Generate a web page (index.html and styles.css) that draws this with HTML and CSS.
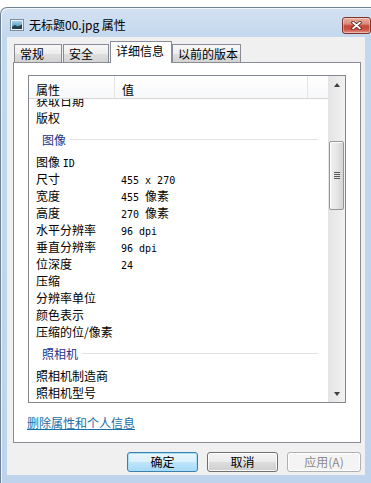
FILE: index.html
```html
<!DOCTYPE html>
<html lang="zh-CN">
<head>
  <meta charset="UTF-8" />
  <title>无标题00.jpg 属性</title>
  <link rel="stylesheet" href="styles.css">
</head>
<body>
  <div id="window">
    <div class="titlebar">
      <svg class="file-icon" width="14" height="12" viewBox="0 0 14 12">
        <defs>
          <linearGradient id="sky" x1="0" y1="0" x2="0" y2="1">
            <stop offset="0" stop-color="#9fd2ee"/>
            <stop offset="1" stop-color="#3d86a8"/>
          </linearGradient>
        </defs>
        <rect x="0.5" y="0.5" width="13" height="11" fill="#eef2f6" stroke="#7f8e9b"/>
        <rect x="2" y="2" width="10" height="8" fill="url(#sky)"/>
        <path d="M2 8 L5 6 L8 7.5 L12 5.5 V10 H2 Z" fill="#23404f"/>
      </svg>
      <span class="title">无标题00.jpg 属性</span>
      <div class="close">
        <svg width="11" height="9" viewBox="0 0 11 9">
          <path d="M2 1.5 L9 7.5 M9 1.5 L2 7.5" stroke="#5a1a12" stroke-width="3.4" stroke-linecap="round"/>
          <path d="M2 1.5 L9 7.5 M9 1.5 L2 7.5" stroke="#fff" stroke-width="1.8" stroke-linecap="round"/>
        </svg>
      </div>
    </div>

    <div class="client">
      <div class="tabs">
        <div class="tab">常规</div>
        <div class="tab">安全</div>
        <div class="tab active">详细信息</div>
        <div class="tab">以前的版本</div>
      </div>

      <div class="panel">
        <div class="list">
          <div class="list-main">
            <div class="list-head">
              <div class="col-name">属性</div>
              <div class="col-value">值</div>
            </div>
            <div class="list-body">
              <div class="rows">
                <div class="row"><div class="k">获取日期</div><div class="v"></div></div>
                <div class="row"><div class="k">版权</div><div class="v"></div></div>
                <div class="group">图像</div>
                <div class="row"><div class="k">图像 <span class="n">ID</span></div><div class="v"></div></div>
                <div class="row"><div class="k">尺寸</div><div class="v"><span class="n">455 x 270</span></div></div>
                <div class="row"><div class="k">宽度</div><div class="v"><span class="n">455 </span>像素</div></div>
                <div class="row"><div class="k">高度</div><div class="v"><span class="n">270 </span>像素</div></div>
                <div class="row"><div class="k">水平分辨率</div><div class="v"><span class="n">96 dpi</span></div></div>
                <div class="row"><div class="k">垂直分辨率</div><div class="v"><span class="n">96 dpi</span></div></div>
                <div class="row"><div class="k">位深度</div><div class="v"><span class="n">24</span></div></div>
                <div class="row"><div class="k">压缩</div><div class="v"></div></div>
                <div class="row"><div class="k">分辨率单位</div><div class="v"></div></div>
                <div class="row"><div class="k">颜色表示</div><div class="v"></div></div>
                <div class="row"><div class="k">压缩的位/像素</div><div class="v"></div></div>
                <div class="group">照相机</div>
                <div class="row"><div class="k">照相机制造商</div><div class="v"></div></div>
                <div class="row"><div class="k">照相机型号</div><div class="v"></div></div>
              </div>
            </div>
          </div>
          <div class="scrollbar">
            <div class="sb-btn"><span class="arrow-up"></span></div>
            <div class="thumb"><span class="grip"></span></div>
            <div class="sb-track"></div>
            <div class="sb-btn"><span class="arrow-down"></span></div>
          </div>
        </div>
        <div class="links"><a href="#">删除属性和个人信息</a></div>
      </div>

      <div class="buttons">
        <button class="btn default">确定</button>
        <button class="btn">取消</button>
        <button class="btn disabled">应用(A)</button>
      </div>
    </div>
  </div>
</body>
</html>
```

FILE: styles.css
```css
body {
  margin: 0;
  background: #fff;
  font-family: "Noto Sans CJK SC", sans-serif;
  font-size: 12px;
  color: #000;
  overflow: hidden;
}
#window {
  margin-top: 7px;
  width: 380px;
  height: 475px;
  padding: 0 0 0 6px;
  border-top: 1px solid #6f8294;
  border-left: 1px solid #6f8294;
  border-radius: 7px 0 0 0;
  background: linear-gradient(#d3e2f3, #c3d7ed 30px, #bfd4ec);
  box-shadow: inset 1px 1px 0 rgba(255,255,255,0.7);
}
.titlebar {
  height: 24px;
  padding-top: 5px;
  display: flex;
  align-items: center;
}
.file-icon {
  margin-left: 3px;
}
.title {
  margin-left: 5px;
  font-size: 12px;
  line-height: 16px;
}
.close {
  margin-left: auto;
  margin-right: 16px;
  width: 27px;
  height: 15px;
  border: 1px solid #83342a;
  border-radius: 3px;
  background: linear-gradient(#e9b0a4, #d98a7c 40%, #c5493a 52%, #c94f3f 75%, #e39a88);
  box-shadow: inset 0 0 0 1px rgba(255,255,255,0.35);
  display: flex;
  align-items: center;
  justify-content: center;
}
.client {
  width: 358px;
  height: 438px;
  padding-top: 4px;
  box-sizing: border-box;
  background: #f0f0f0;
}
.tabs {
  height: 21px;
  padding-left: 7px;
  display: flex;
  align-items: flex-end;
  gap: 1px;
}
.tab {
  height: 17px;
  line-height: 17px;
  padding-left: 5px;
  box-sizing: content-box;
  border: 1px solid #898c95;
  border-bottom: none;
  background: linear-gradient(#f7f7f7, #ededed 50%, #dfdfdf 51%, #d3d3d3);
}
.tab:nth-child(1) { width: 41px; }
.tab:nth-child(2) { width: 39px; }
.tab:nth-child(3) { width: 55px; }
.tab:nth-child(4) { width: 62px; margin-left: -1px; }
.tab.active {
  height: 21px;
  line-height: 18px;
  margin-bottom: -1px;
  background: #fff;
  position: relative;
  z-index: 1;
}
.panel {
  margin-left: 6px;
  width: 348px;
  height: 381px;
  box-sizing: border-box;
  padding: 12px 0 0 14px;
  border: 1px solid #898c95;
  background: #fff;
}
.list {
  width: 318px;
  height: 328px;
  box-sizing: border-box;
  border: 1px solid #828790;
  display: flex;
}
.list-main {
  flex: 1;
  display: flex;
  flex-direction: column;
}
.list-head {
  height: 23px;
  box-sizing: border-box;
  border-bottom: 1px solid #d5d5d5;
  background: linear-gradient(#fff, #f7f8fa);
  display: flex;
}
.list-head div {
  padding-top: 5px;
  line-height: 17px;
  border-right: 1px solid #e5e5e5;
  box-sizing: border-box;
}
.col-name {
  width: 86px;
  padding-left: 7px;
}
.col-value {
  width: 193px;
  padding-left: 7px;
}
.list-body {
  flex: 1;
  overflow: hidden;
}
.rows {
  margin-top: -7px;
}
.row {
  height: 17px;
  line-height: 17px;
  display: flex;
  white-space: nowrap;
}
.k {
  width: 92px;
  padding-left: 7px;
  box-sizing: border-box;
}
.n {
  font-family: "DejaVu Sans Mono", monospace;
  font-size: 10px;
}
.group {
  height: 27px;
  padding-left: 13px;
  margin-right: 10px;
  display: flex;
  align-items: center;
  color: #1e3287;
}
.group::after {
  content: "";
  flex: 1;
  height: 1px;
  margin-left: 4px;
  background: #dfe2e7;
}
.scrollbar {
  width: 17px;
  display: flex;
  flex-direction: column;
  background: linear-gradient(to right, #e4e4e4, #f1f1f1);
}
.sb-btn {
  height: 17px;
  display: flex;
  align-items: center;
  justify-content: center;
}
.arrow-up {
  border-left: 3px solid transparent;
  border-right: 3px solid transparent;
  border-bottom: 4px solid #3f3f3f;
}
.arrow-down {
  border-left: 3px solid transparent;
  border-right: 3px solid transparent;
  border-top: 4px solid #3f3f3f;
}
.thumb {
  margin: 48px 1px 0;
  height: 69px;
  box-sizing: border-box;
  border: 1px solid #959595;
  border-radius: 2px;
  background: linear-gradient(to right, #f2f2f2, #e6e6e6 50%, #d4d4d4);
  box-shadow: inset 1px 1px 0 #fff;
  display: flex;
  align-items: center;
  justify-content: center;
}
.grip {
  width: 6px;
  height: 7px;
  background: repeating-linear-gradient(#5a5a5a 0 1px, transparent 1px 2px);
}
.sb-track {
  flex: 1;
}
.links {
  margin-top: 11px;
  margin-left: -1px;
  line-height: 17px;
}
.links a {
  color: #1a6ea6;
  text-decoration: underline;
}
.buttons {
  margin-top: 9px;
  padding-right: 4px;
  display: flex;
  justify-content: flex-end;
  gap: 9px;
}
.btn {
  width: 71px;
  height: 20px;
  padding: 0;
  font-family: "Noto Sans CJK SC", sans-serif;
  font-size: 12px;
  line-height: 18px;
  color: #000;
  border: 1px solid #707070;
  border-radius: 3px;
  background: linear-gradient(#f3f3f3, #ebebeb 50%, #dddddd 51%, #cfcfcf);
  box-shadow: inset 0 0 0 1px rgba(255,255,255,0.8);
}
.btn.default {
  border-color: #3c7fb1;
  background: linear-gradient(#eaf6fd, #d9f0fc 50%, #bee6fd 51%, #a7d9f5);
  box-shadow: inset 0 0 0 1px #a6dcf6;
}
.btn.disabled {
  width: 74px;
  color: #8a8a8a;
  border-color: #adb2b5;
  background: #f4f4f4;
}
```
